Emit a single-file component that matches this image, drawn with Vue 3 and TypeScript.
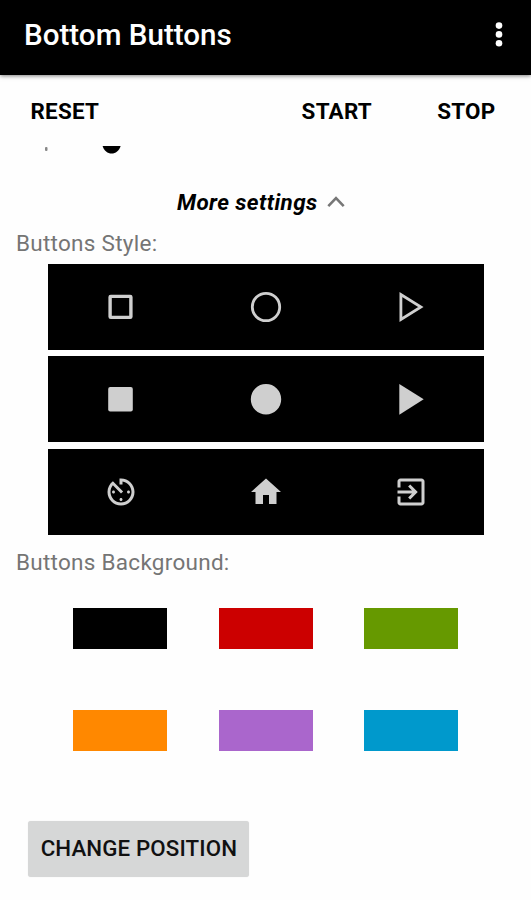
<script setup lang="ts">
type Shape = { d: string; outline?: number }

const styleRows: { name: string; icons: Shape[] }[] = [
  {
    name: 'Outlined',
    icons: [
      { d: 'M7.8 5.7h19.4a2.4 2.4 0 0 1 2.4 2.4v19.6a2.4 2.4 0 0 1-2.4 2.4h-19.4a2.4 2.4 0 0 1-2.4-2.4v-19.6A2.4 2.4 0 0 1 7.8 5.7zM8.8 9.1v17.6h17.4V9.1z' },
      { d: 'M18 4.3a13.7 13.7 0 1 0 0 27.4a13.7 13.7 0 1 0 0-27.4z', outline: 2.8 },
      { d: 'M7.9 5.6v24.8L27.9 18z', outline: 2.8 },
    ],
  },
  {
    name: 'Filled',
    icons: [
      { d: 'M7.2 6h20.6a2 2 0 0 1 2 2v20.4a2 2 0 0 1-2 2H7.2a2 2 0 0 1-2-2V8a2 2 0 0 1 2-2z' },
      { d: 'M18 3.1a15.2 15.2 0 1 0 0 30.4a15.2 15.2 0 1 0 0-30.4z' },
      { d: 'M6.3 3.1v30.6L30.7 18.3z' },
    ],
  },
]

const materialIcons: string[] = [
  'M11 17c0 .55.45 1 1 1s1-.45 1-1-.45-1-1-1-1 .45-1 1zm0-14v4h2V5.08c3.39.49 6 3.39 6 6.92 0 3.87-3.13 7-7 7s-7-3.13-7-7c0-1.68.59-3.22 1.58-4.42L12 13l1.41-1.41-6.8-6.8v.02C4.42 6.45 3 9.05 3 12c0 4.97 4.02 9 9 9 4.97 0 9-4.03 9-9s-4.03-9-9-9h-1zm7 9c0-.55-.45-1-1-1s-1 .45-1 1 .45 1 1 1 1-.45 1-1zM6 12c0 .55.45 1 1 1s1-.45 1-1-.45-1-1-1-1 .45-1 1z',
  'M10 20v-6h4v6h5v-8h3L12 3 2 12h3v8z',
  'M10.09 15.59L11.5 17l5-5-5-5-1.41 1.41L12.67 11H3v2h9.67l-2.58 2.59zM19 3H5c-1.11 0-2 .9-2 2v4h2V5h14v14H5v-4H3v4c0 1.1.89 2 2 2h14c1.1 0 2-.9 2-2V5c0-1.1-.9-2-2-2z',
]

const swatches: string[] = ['black', 'red', 'green', 'orange', 'purple', 'blue']
</script>

<template>
  <div class="screen">
    <header class="appbar">
      <h1 class="title">Bottom Buttons</h1>
      <svg class="overflow" viewBox="0 0 8 26" aria-hidden="true">
        <circle cx="4" cy="3.6" r="3.3" />
        <circle cx="4" cy="12.4" r="3.3" />
        <circle cx="4" cy="21.2" r="3.3" />
      </svg>
    </header>

    <nav class="actions">
      <span class="reset">RESET</span>
      <span class="start">START</span>
      <span class="stop">STOP</span>
    </nav>

    <div class="slider">
      <svg viewBox="0 0 531 10" aria-hidden="true">
        <rect x="45" y="1" width="2.5" height="4" rx="1" fill="#888" />
        <path d="M102.6 0H120.6C119.2 4.8 115.6 7.6 111.6 7.6S104 4.8 102.6 0z" />
      </svg>
    </div>

    <div class="more">
      <span class="more-label">More settings</span>
      <svg class="chevron" viewBox="0 0 18 12" aria-hidden="true">
        <path d="M1.3 10.2L9 2.2l7.7 8" />
      </svg>
    </div>

    <h2 class="section">Buttons Style:</h2>
    <div class="rows">
      <div v-for="row in styleRows" :key="row.name" class="row">
        <div v-for="(icon, i) in row.icons" :key="i" class="cell">
          <svg class="icon" viewBox="0 0 36 36" aria-hidden="true">
            <path
              :d="icon.d"
              :class="{ outlined: icon.outline }"
              :stroke-width="icon.outline"
              fill-rule="evenodd"
            />
          </svg>
        </div>
      </div>
      <div class="row">
        <div v-for="(d, i) in materialIcons" :key="i" class="cell">
          <svg class="icon" viewBox="0 0 24 24" aria-hidden="true"><path :d="d" /></svg>
        </div>
      </div>
    </div>

    <h2 class="section">Buttons Background:</h2>
    <div class="swatches">
      <div v-for="color in swatches" :key="color" class="swatch" :class="color"></div>
    </div>

    <button class="change" type="button">CHANGE POSITION</button>
  </div>
</template>

<style>
body {
  margin: 0;
  background: #fefefe;
}
</style>

<style scoped>
.screen {
  width: 531px;
  height: 900px;
  overflow: hidden;
  background: #fefefe;
  color: #000;
  font-family: Roboto, "Liberation Sans", sans-serif;
  display: flex;
  flex-direction: column;
}
.appbar {
  box-sizing: border-box;
  height: 75px;
  flex: none;
  padding: 0 28px 6px 24px;
  display: flex;
  align-items: center;
  justify-content: space-between;
  background: #000;
  box-shadow: 0 1px 4px rgba(0, 0, 0, 0.5);
}
.title {
  margin: 0;
  color: #fff;
  font-size: 29.6px;
  font-weight: 500;
  line-height: 36px;
}
.overflow {
  width: 8px;
  height: 26px;
  fill: #fff;
}
.actions {
  box-sizing: border-box;
  height: 71px;
  flex: none;
  padding: 0 35.5px 0 30.5px;
  display: flex;
  align-items: center;
  font-size: 22.4px;
  font-weight: 700;
  letter-spacing: 0.25px;
}
.start {
  margin-left: auto;
}
.stop {
  margin-left: 65.3px;
}
.slider {
  height: 10px;
  flex: none;
}
.slider svg {
  display: block;
  width: 531px;
  height: 10px;
}
.more {
  height: 28px;
  flex: none;
  margin-top: 32px;
  padding-left: 177px;
  display: flex;
  align-items: center;
  gap: 9px;
}
.more-label {
  font-size: 22.4px;
  font-weight: 700;
  font-style: italic;
  letter-spacing: 0.4px;
}
.chevron {
  width: 18px;
  height: 12px;
  fill: none;
  stroke: #777;
  stroke-width: 2.6;
}
.section {
  margin: 12px 0 0 16px;
  flex: none;
  height: 31px;
  line-height: 30px;
  font-size: 22.5px;
  font-weight: 400;
  letter-spacing: 0.27px;
  color: #757575;
}
.rows {
  width: 436px;
  margin: 5px 0 0 48px;
  flex: none;
  display: flex;
  flex-direction: column;
  gap: 6.4px;
}
.row {
  height: 86px;
  display: grid;
  grid-template-columns: repeat(3, 1fr);
  background: #000;
}
.cell {
  display: flex;
  align-items: center;
  justify-content: center;
}
.icon {
  width: 36px;
  height: 36px;
  fill: #cfcfcf;
}
.outlined {
  fill: none;
  stroke: #cfcfcf;
}
.swatches {
  width: 436px;
  margin: 30px 0 0 47.8px;
  flex: none;
  display: grid;
  grid-template-columns: repeat(3, 1fr);
  justify-items: center;
  row-gap: 61px;
}
.swatch {
  width: 94px;
  height: 41px;
}
.black { background: #000; }
.red { background: #c00; }
.green { background: #690; }
.orange { background: #f80; }
.purple { background: #a6c; }
.blue { background: #09c; }
.change {
  flex: none;
  align-self: flex-start;
  width: 221px;
  height: 56px;
  margin: 70px 0 0 28.4px;
  padding: 0 0 2px;
  border: 0;
  border-radius: 3px;
  background: #d6d7d7;
  box-shadow: 0 0 1px rgba(0, 0, 0, 0.15);
  color: #111;
  font-family: inherit;
  font-size: 22.3px;
  font-weight: 500;
  letter-spacing: 0.12px;
  white-space: nowrap;
}
</style>
